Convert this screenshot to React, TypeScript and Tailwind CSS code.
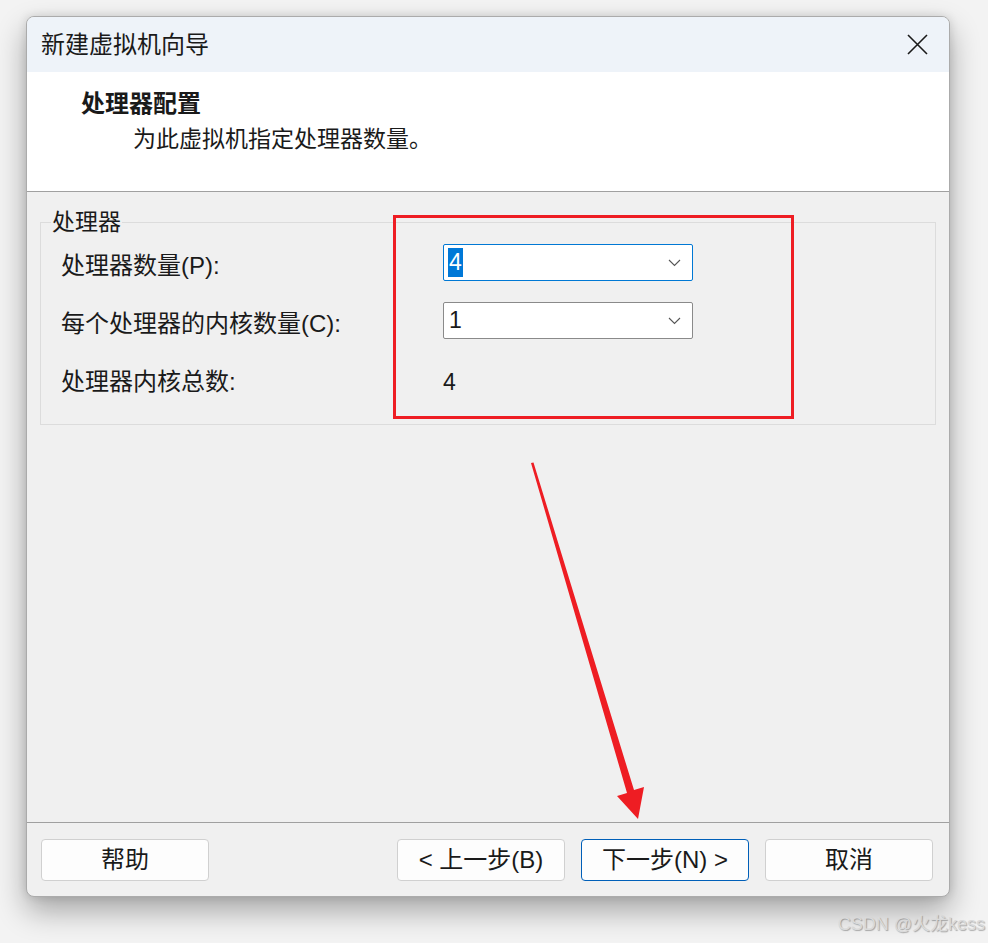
const font = "font-['Liberation_Sans','Noto_Sans_CJK_SC',sans-serif]";

const Chevron = () => (
  <svg width="13" height="8" viewBox="0 0 13 8" className="mr-[11px]">
    <path d="M1 1l5.5 5.5L12 1" fill="none" stroke="#555" strokeWidth="1.1" />
  </svg>
);

const Row = ({ label, children }: { label: string; children: React.ReactNode }) => (
  <div className="flex h-[37px]">
    <div className="w-[382px] pt-[7px] text-[24px] leading-[30px]">{label}</div>
    {children}
  </div>
);

const Btn = ({ text, primary }: { text: string; primary?: boolean }) => (
  <button
    className={
      primary
        ? "h-[42px] w-[168px] rounded-[4px] border border-[#005fb8] bg-[#fdfdfd] text-[24px] leading-[40px] text-[#1a1a1a]"
        : "h-[42px] w-[168px] rounded-[4px] border border-[#d0d0d0] bg-[#fdfdfd] text-[24px] leading-[40px] text-[#1a1a1a]"
    }
  >
    {text}
  </button>
);

export default function App() {
  return (
    <div className={`relative h-[943px] w-[988px] overflow-hidden bg-[#f3f3f3] pl-[26px] pt-[16px] ${font}`}>
      <div className="flex h-[881px] w-[924px] flex-col overflow-hidden rounded-[8px] border border-[#ababab] bg-[#f0f0f0] text-[#1a1a1a] shadow-[0_14px_30px_rgba(0,0,0,0.32),0_0_10px_rgba(0,0,0,0.12)]">
        {/* title bar */}
        <div className="flex h-[55px] items-center justify-between bg-[#eef3f9] pl-[14px] pr-[21px]">
          <span className="text-[24px] leading-[32px]">新建虚拟机向导</span>
          <svg width="21" height="21" viewBox="0 0 21 21">
            <path d="M1 1l19 19M20 1L1 20" stroke="#1a1a1a" strokeWidth="1.6" />
          </svg>
        </div>

        {/* header */}
        <div className="h-[120px] border-b border-[#a0a0a0] bg-white pl-[54px] pt-[16px]">
          <div className="text-[24px] font-bold leading-[32px]">处理器配置</div>
          <div className="ml-[52px] mt-[3px] text-[23px] leading-[32px]">为此虚拟机指定处理器数量。</div>
        </div>

        {/* body */}
        <div className="flex-1 px-[13px] pt-[30px] text-[23px]">
          <div className="relative h-[203px] border border-[#dcdcdc] pl-[20px] pt-[21px]">
            <span className="absolute left-[10px] top-[-15px] bg-[#f0f0f0] px-[1px] leading-[28px]">处理器</span>
            <div className="flex flex-col gap-[21px]">
              <Row label="处理器数量(P):">
                <div className="flex h-[37px] w-[250px] items-center justify-between rounded-[2px] border border-[#0078d4] bg-white">
                  <span className="ml-[4px] h-[29px] bg-[#0078d7] px-[1px] leading-[29px] text-white">4</span>
                  <Chevron />
                </div>
              </Row>
              <Row label="每个处理器的内核数量(C):">
                <div className="flex h-[37px] w-[250px] items-center justify-between rounded-[2px] border border-[#8a8a8a] bg-white">
                  <span className="ml-[5px] leading-[29px]">1</span>
                  <Chevron />
                </div>
              </Row>
              <Row label="处理器内核总数:">
                <div className="pt-[7px] leading-[30px]">4</div>
              </Row>
            </div>
          </div>
        </div>

        {/* footer */}
        <div className="flex h-[74px] border-t border-[#a0a0a0] pl-[14px] pr-[16px] pt-[16px]">
          <Btn text="帮助" />
          <div className="ml-auto flex gap-[16px]">
            <Btn text="< 上一步(B)" />
            <Btn text="下一步(N) >" primary />
            <Btn text="取消" />
          </div>
        </div>
      </div>

      {/* annotations */}
      <div className="absolute left-[393px] top-[215px] h-[204px] w-[401px] border-[3px] border-[#ee1d23]" />
      <svg className="absolute left-0 top-0" width="988" height="943">
        <polygon points="531,463 533.5,462.5 634,790 644,787 638,819 617,796 627,793" fill="#ee1d23" />
      </svg>
      <span className="absolute right-[3px] top-[913px] text-[18px] leading-[22px] text-[#dadada] [text-shadow:1px_1px_1px_rgba(0,0,0,0.3)]">
        CSDN @火龙kess
      </span>
    </div>
  );
}
